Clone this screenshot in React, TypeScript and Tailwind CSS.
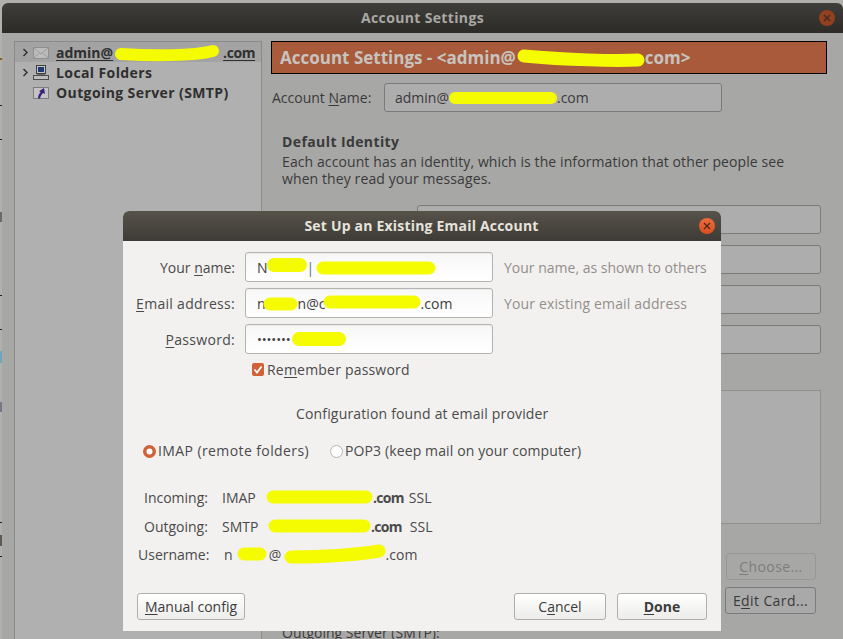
const font = "font-['Open_Sans','Noto_Sans',sans-serif]";

function Mark({ w, h, d, sw, className = "" }: { w: number; h: number; d: string; sw: number; className?: string }) {
  return (
    <svg width={w} height={h} viewBox={`0 0 ${w} ${h}`} className={`shrink-0 ${className}`}>
      <path d={d} fill="none" stroke="#f5fb00" strokeWidth={sw} strokeLinecap="round" strokeLinejoin="round" />
    </svg>
  );
}

function BgInput({ className = "", children }: { className?: string; children?: React.ReactNode }) {
  return (
    <div className={`h-[29px] rounded-[3px] border border-[#7b7b7b] bg-[#adadad] flex items-center ${className}`}>
      {children}
    </div>
  );
}

function Field({ children }: { children: React.ReactNode }) {
  return (
    <div className="w-[248px] h-[30px] rounded-[3px] border border-[#b5b3ae] bg-gradient-to-b from-[#f7f7f7] to-white flex items-center pl-[11px] text-[#3c3c3c] shadow-[inset_0_1px_1px_rgba(0,0,0,0.05)]">
      {children}
    </div>
  );
}

function Btn({ w, bold, children }: { w: number; bold?: boolean; children: React.ReactNode }) {
  return (
    <div
      style={{ width: w }}
      className={`h-[27px] rounded-[3px] border border-[#b0aea9] bg-gradient-to-b from-white to-[#ececea] flex items-center justify-center text-[#3c3c3c] ${bold ? "font-bold" : ""}`}
    >
      {children}
    </div>
  );
}

function Chevron() {
  return (
    <svg width="7" height="9" viewBox="0 0 7 9" className="shrink-0">
      <path d="M1.500 1l3.500 3.500L1.500 8" fill="none" stroke="#2f2f2f" strokeWidth="1.4" />
    </svg>
  );
}

function EnvelopeIcon() {
  return (
    <svg width="16" height="12" viewBox="0 0 16 12">
      <rect x="0.5" y="0.5" width="15" height="11" fill="#bcbcbc" stroke="#8f8f8f" />
      <path d="M1 1l7 6 7-6M1 11l5-5M15 11l-5-5" fill="none" stroke="#9c9c9c" />
    </svg>
  );
}

function ComputerIcon() {
  return (
    <svg width="16" height="15" viewBox="0 0 16 15">
      <rect x="3.5" y="0.5" width="9" height="8" fill="#c4c4c4" stroke="#3f3f3f" />
      <rect x="5" y="2" width="6" height="5" fill="#1e3b78" />
      <rect x="4" y="9" width="8" height="1" fill="#6d6d6d" />
      <rect x="0.5" y="10.5" width="15" height="4" fill="#bcbcbc" stroke="#4c4c4c" />
    </svg>
  );
}

function OutgoingIcon() {
  return (
    <svg width="16" height="12" viewBox="0 0 16 12">
      <rect x="0.5" y="0.5" width="15" height="11" fill="#c3c3c3" stroke="#7d7d7d" />
      <path d="M5 11.500c0-3 1.200-5 2.800-6.500L6 4.200 11 1l1 6-1.900-1C8.800 7.200 7.500 9 7 11.500z" fill="#38207f" />
    </svg>
  );
}

function Close({ dim }: { dim?: boolean }) {
  return (
    <div className={`w-4 h-4 rounded-full flex items-center justify-center ${dim ? "bg-[#93401f]" : "bg-gradient-to-b from-[#ee6a3a] to-[#d94f1f]"}`}>
      <svg width="8" height="8" viewBox="0 0 8 8">
        <path d="M1 1l6 6M7 1L1 7" stroke={dim ? "#3c2a20" : "#4a2a1c"} strokeWidth="1.3" />
      </svg>
    </div>
  );
}

function U({ children }: { children: React.ReactNode }) {
  return <span className="underline underline-offset-2">{children}</span>;
}

function Background() {
  return (
    <div className="ml-[2px] mt-[3px] h-[636px] bg-[#a7a7a5] rounded-t-[6px] flex flex-col overflow-hidden">
      <div className="h-[30px] shrink-0 bg-gradient-to-b from-[#3f3e3a] to-[#2c2b27] flex items-center relative">
        <div className="flex-1 text-center font-bold text-[14px] tracking-[0.35px] text-[#a9a8a4] pl-[24px] pb-[2px]">Account Settings</div>
        <div className="pr-[8px]"><Close dim /></div>
      </div>
      <div className="flex-1 flex pl-[12px] pt-[8px] min-h-0">
        <div className="w-[248px] shrink-0 bg-[#b0b0b0] border-l border-r border-t border-[#8a8a8a] text-[#2f2f2f] font-bold text-[14px] tracking-[0.4px]">
          <div className="h-[20px] pt-[1px] bg-[#a3a3a3] flex items-center pl-[7px] gap-[4px]">
            <Chevron />
            <EnvelopeIcon />
            <span className="flex items-center ml-[3px] underline underline-offset-2 tracking-normal">
              admin@
              <Mark w={110} h={20} sw={12} d="M8 11C40 13 80 13 100 8" className="-my-1" />
              <span className="tracking-[-0.4px]">.com</span>
            </span>
          </div>
          <div className="h-[20px] pt-[1px] flex items-center pl-[7px] gap-[4px]">
            <Chevron />
            <ComputerIcon />
            <span className="ml-[3px]">Local Folders</span>
          </div>
          <div className="h-[20px] pt-[1px] flex items-center pl-[18px] gap-[4px]">
            <OutgoingIcon />
            <span className="ml-[3px]">Outgoing Server (SMTP)</span>
          </div>
        </div>
        <div className="flex-1 pl-[9px] pr-[16px] text-[#3a3a3a] text-[14px]">
          <div className="h-[33px] bg-[#a85a3b] border border-black flex items-center pl-[8px] font-bold text-[17px] text-[#c7c3bf]">
            Account Settings - &lt;admin@
            <Mark w={129} h={22} sw={13} d="M8 9C50 13 100 14 122 13" className="-my-1" />
            com&gt;
          </div>
          <div className="mt-[9px] ml-[1px] flex items-center gap-[10px]">
            <span className="w-[102px]">Account <U>N</U>ame:</span>
            <BgInput className="w-[338px] pl-[10px]">
              admin@
              <Mark w={108} h={16} sw={12} d="M6 8H102" />
              .com
            </BgInput>
          </div>
          <div className="mt-[19px] pl-[11px]">
            <div className="font-bold tracking-[0.4px]">Default Identity</div>
            <div className="leading-[17px] mt-[1px] tracking-[0.1px]">
              Each account has an identity, which is the information that other people see
              <br />
              when they read your messages.
            </div>
          </div>
          <div className="mt-[18px] ml-[146px] mr-[6px] flex flex-col gap-[11px]">
            <BgInput />
            <BgInput />
            <BgInput />
            <BgInput />
          </div>
          <div className="mt-[36px] ml-[146px] mr-[6px] h-[134px] border border-[#8f8f8f] bg-[#adadad]" />
          <div className="mt-[29px] flex justify-end pr-[11px]">
            <div className="w-[90px] h-[27px] rounded-[3px] border border-[#979797] flex items-center justify-center text-[#7d7d7d] tracking-[0.4px]">
              <span><U>C</U>hoose...</span>
            </div>
          </div>
          <div className="mt-[7px] flex justify-end pr-[11px]">
            <div className="w-[91px] h-[27px] rounded-[3px] border border-[#7b7b7b] bg-[#a9a9a9] flex items-center justify-center tracking-[0.4px]">
              <span>E<U>d</U>it Card...</span>
            </div>
          </div>
          <div className="mt-[12px] ml-[11px] leading-none">Outgoing Server (SMTP):</div>
        </div>
      </div>
    </div>
  );
}

function Row({ label, hint, children }: { label: React.ReactNode; hint?: React.ReactNode; children: React.ReactNode }) {
  return (
    <div className="flex items-center h-[30px]">
      <div className="w-[112px] text-right text-[#4a4a4a] mr-[10px] whitespace-nowrap">{label}</div>
      <Field>{children}</Field>
      {hint && <div className="ml-[11px] text-[#928f8a]">{hint}</div>}
    </div>
  );
}

function Dialog() {
  return (
    <div className="absolute left-[123px] top-[211px] w-[598px] h-[420px] bg-[#f2f1f0] rounded-t-[6px] flex flex-col text-[14px] text-[#4a4a4a]">
      <div className="h-[30px] shrink-0 rounded-t-[6px] bg-gradient-to-b from-[#57534b] to-[#3d3b35] flex items-center">
        <div className="flex-1 text-center font-bold text-[14px] tracking-[0.2px] text-[#e6e3dd] pl-[21px] pb-[2px]">Set Up an Existing Email Account</div>
        <div className="pr-[6px]"><Close /></div>
      </div>
      <div className="flex-1 flex flex-col pt-[11px]">
        <div className="flex flex-col gap-[6px]">
          <Row label={<>Your <U>n</U>ame:</>} hint="Your name, as shown to others">
            N
            <Mark w={40} h={18} sw={14} d="M7 7H33" className="-ml-[1px]" />
            <span className="mr-[2px] text-[#5f6f80]">|</span>
            <Mark w={120} h={18} sw={13} d="M7 10H113" />
          </Row>
          <Row
            label={<span className="tracking-[0.3px]"><U>E</U>mail address:</span>}
            hint={<span className="tracking-[0.15px]">Your existing email address</span>}
          >
            n
            <Mark w={35} h={18} sw={13} d="M7 10H28" className="ml-[-3px]" />
            <span className="w-[25px]">n@c</span>
            <Mark w={98} h={18} sw={13} d="M7 8H91" />
            .com
          </Row>
          <Row label={<span className="tracking-[0.3px]"><U>P</U>assword:</span>}>
            <span className="text-[13px] leading-none w-[34px] whitespace-nowrap tracking-[-0.1px]">•••••••</span>
            <Mark w={56} h={16} sw={14} d="M8 8H48" />
          </Row>
        </div>
        <div className="mt-[5px] ml-[129px] flex items-center gap-[3px]">
          <svg width="12" height="13" viewBox="0 0 12 13">
            <rect width="12" height="13" rx="2" fill="#cf6238" />
            <path d="M2.500 6.500L5 9.500 9.500 3.500" fill="none" stroke="#fff" strokeWidth="1.8" />
          </svg>
          <span className="tracking-[0.2px]">Re<U>m</U>ember password</span>
        </div>
        <div className="mt-[24px] ml-[173px] leading-[20px] tracking-[0.16px]">Configuration found at email provider</div>
        <div className="mt-[17px] ml-[20px] flex items-center leading-[20px]">
          <svg width="13" height="13" viewBox="0 0 13 13">
            <circle cx="6.500" cy="6.500" r="6.500" fill="#cf6238" />
            <circle cx="6.500" cy="6.500" r="3" fill="#fff" />
          </svg>
          <span className="ml-[2px] tracking-[0.4px]">IMAP (remote folders)</span>
          <svg width="13" height="13" viewBox="0 0 13 13" className="ml-[21px]">
            <circle cx="6.500" cy="6.500" r="6" fill="#fff" stroke="#b5b3ae" />
          </svg>
          <span className="ml-[2px] tracking-[0.12px]">POP3 (keep mail on your computer)</span>
        </div>
        <div className="mt-[26px] ml-[21px] flex items-center h-[20px]">
          <span className="w-[78px]">Incoming:</span>
          <span className="w-[44px]">IMAP</span>
          <Mark w={107} h={18} sw={13} d="M7 9H100" />
          <b className="tracking-[-0.7px]">.com</b>
          <span className="ml-[5px]">SSL</span>
        </div>
        <div className="mt-[9px] ml-[21px] flex items-center h-[20px]">
          <span className="w-[78px]">Outgoing:</span>
          <span className="w-[46px]">SMTP</span>
          <Mark w={103} h={18} sw={13} d="M7 9H96" />
          <b className="tracking-[-0.7px]">.com</b>
          <span className="ml-[8px]">SSL</span>
        </div>
        <div className="mt-[8px] ml-[15px] flex items-center h-[20px]">
          <span className="w-[86px]">Username:</span>
          n
          <Mark w={30} h={16} sw={13} d="M7 8H23" className="ml-[4px]" />
          <span className="w-[17px] text-center">@</span>
          <Mark w={102} h={20} sw={13} d="M7 13C40 13 70 11 95 7" />
          .com
        </div>
        <div className="mt-auto mb-[11px] pl-[14px] pr-[14px] flex items-center">
          <Btn w={108}><span><U>M</U>anual config</span></Btn>
          <div className="ml-auto flex gap-[11px]">
            <Btn w={92}><span>C<U>a</U>ncel</span></Btn>
            <Btn w={90} bold><span><U>D</U>one</span></Btn>
          </div>
        </div>
      </div>
    </div>
  );
}

// bits of the desktop peeking out left of the window
function DesktopEdge() {
  return (
    <>
      <div className="absolute left-0 top-[58px] w-[2px] h-[2px] bg-[#8a5a20]" />
      <div className="absolute left-0 top-[105px] w-[2px] h-px bg-[#222]" />
      <div className="absolute left-0 top-[139px] w-[2px] h-px bg-[#222]" />
      <div className="absolute left-0 top-[212px] w-[2px] h-[10px] bg-[#6a6a70]" />
      <div className="absolute left-0 top-[295px] w-[2px] h-px bg-[#222]" />
      <div className="absolute left-0 top-[329px] w-[2px] h-px bg-[#222]" />
      <div className="absolute left-0 top-[351px] w-[2px] h-[12px] bg-[#6fa6bd]" />
      <div className="absolute left-0 top-[402px] w-[2px] h-[10px] bg-[#777788]" />
      <div className="absolute left-0 top-[522px] w-[2px] h-px bg-[#222]" />
      <div className="absolute left-0 top-[535px] w-[2px] h-[11px] bg-[#5f5a55]" />
      <div className="absolute left-0 top-[556px] w-[2px] h-px bg-[#222]" />
    </>
  );
}

export default function App() {
  return (
    <div className={`relative w-[843px] h-[639px] overflow-hidden bg-[#b0b0ae] ${font}`}>
      <Background />
      <DesktopEdge />
      <Dialog />
    </div>
  );
}
